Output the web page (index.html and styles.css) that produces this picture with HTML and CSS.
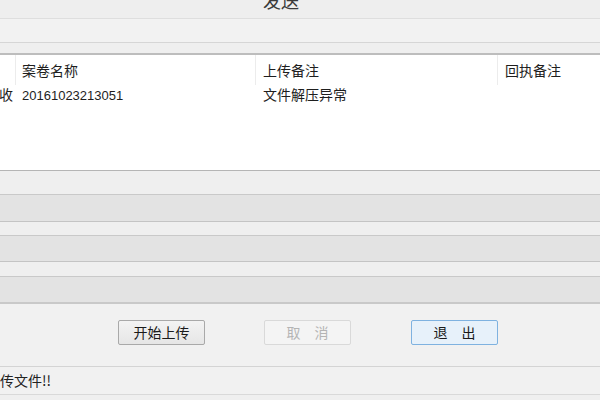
FILE: index.html
```html
<!DOCTYPE html>
<html>
<head>
<meta charset="utf-8">
<link rel="stylesheet" href="styles.css">
</head>
<body>
<div class="window">
  <div class="title"><span class="title-text">发送</span></div>
  <div class="band band-a"></div>
  <div class="band band-b"></div>
  <div class="table">
    <div class="row head">
      <div class="cell c0"></div>
      <div class="cell c1">案卷名称</div>
      <div class="cell c2">上传备注</div>
      <div class="cell c3">回执备注</div>
    </div>
    <div class="row body-row">
      <div class="cell c0">收</div>
      <div class="cell c1"><span class="num">20161023213051</span></div>
      <div class="cell c2">文件解压异常</div>
      <div class="cell c3"></div>
    </div>
  </div>
  <div class="band light h23"></div>
  <div class="band dark h26"></div>
  <div class="band light h13"></div>
  <div class="band dark h25"></div>
  <div class="band light h14"></div>
  <div class="band dark h25 last"></div>
  <div class="buttons">
    <button class="btn">开始上传</button>
    <button class="btn disabled">取　消</button>
    <button class="btn default">退　出</button>
  </div>
  <div class="status">传文件!!</div>
  <div class="foot"></div>
</div>
</body>
</html>
```
FILE: styles.css
```css
html, body {
  margin: 0;
  padding: 0;
}
body {
  width: 600px;
  height: 400px;
  overflow: hidden;
  background: #f0f0f0;
  font-family: "Noto Sans CJK SC", "Liberation Sans", sans-serif;
  color: #1e1e1e;
}
.window {
  display: flex;
  flex-direction: column;
  width: 600px;
  height: 400px;
}
.title {
  height: 18px;
  flex: none;
  overflow: hidden;
  display: flex;
  align-items: flex-end;
  padding-left: 263px;
  background: #eeeeee;
  border-bottom: 1px solid #dedede;
}
.title-text {
  font-size: 18px;
  line-height: 18px;
  margin-bottom: 9px;
  color: #3a3a3a;
}
.band {
  flex: none;
}
.band-a {
  height: 23px;
  background: #f2f2f2;
  border-bottom: 1px solid #d6d6d6;
}
.band-b {
  height: 10px;
  background: #efefef;
  border-bottom: 2px solid #bdbdbd;
}
.table {
  flex: none;
  height: 115px;
  background: #ffffff;
  border-bottom: 1px solid #b5b5b5;
  font-size: 14px;
}
.row {
  display: grid;
  grid-template-columns: 16px 240px 242px 102px;
}
.head {
  height: 30px;
  align-items: center;
}
.head .cell {
  height: 30px;
  line-height: 30px;
  border-right: 1px solid #ececec;
}
.head .cell.c3 {
  border-right: none;
}
.body-row {
  height: 18px;
  line-height: 18px;
}
.cell {
  white-space: nowrap;
  overflow: hidden;
  box-sizing: border-box;
}
.c0 {
  text-align: right;
  padding-right: 3px;
  overflow: visible;
  display: flex;
  justify-content: flex-end;
}
.c1 {
  padding-left: 6px;
}
.c2, .c3 {
  padding-left: 7px;
}
.num {
  font-family: "Liberation Sans", sans-serif;
  font-size: 13px;
}
.light {
  background: #efefef;
  border-bottom: 1px solid #c9c9c9;
}
.dark {
  background: #e3e3e3;
  border-bottom: 1px solid #c4c4c4;
}
.h23 { height: 23px; }
.h26 { height: 26px; }
.h13 { height: 13px; }
.h25 { height: 25px; }
.h14 { height: 14px; }
.last { border-bottom: 2px solid #c9c9c9; }
.buttons {
  flex: none;
  height: 63px;
  box-sizing: border-box;
  padding-top: 16px;
  display: flex;
  align-items: flex-start;
  padding-left: 118px;
  gap: 59px;
  border-bottom: 1px solid #d4d4d4;
  background: #f1f1f1;
}
.btn {
  width: 87px;
  height: 25px;
  margin: 0;
  padding: 0;
  font-family: "Noto Sans CJK SC", sans-serif;
  font-size: 14px;
  line-height: 23px;
  color: #1a1a1a;
  background: linear-gradient(#f3f3f3, #e6e6e6);
  border: 1px solid #a9a9a9;
  border-radius: 2px;
}
.btn.disabled {
  color: #b4b4b4;
  background: #f4f4f4;
  border-color: #d9d9d9;
}
.btn.default {
  background: #e7f1fa;
  border-color: #7fb2e0;
  margin-left: 1px;
}
.status {
  flex: none;
  height: 27px;
  line-height: 27px;
  font-size: 14px;
  background: #f1f1f1;
  border-bottom: 1px solid #d9d9d9;
  color: #222;
}
.foot {
  flex: 1;
  background: #efefef;
}
```
